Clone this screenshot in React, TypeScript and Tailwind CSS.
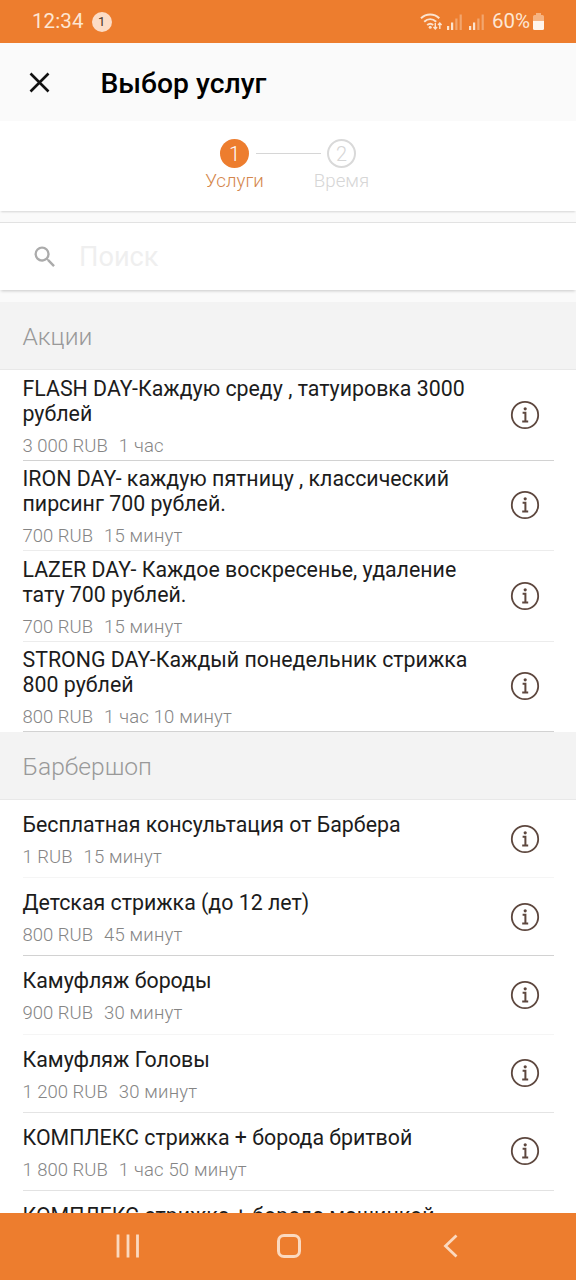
import React from "react";

type Service = {
  title: string;
  price: string;
  duration: string;
  line: string;
};

const promotions: Service[] = [
  {
    title: "FLASH DAY-Каждую среду , татуировка 3000 рублей",
    price: "3 000 RUB",
    duration: "1 час",
    line: "border-[#d2d2d2]",
  },
  {
    title: "IRON DAY- каждую пятницу , классический пирсинг 700 рублей.",
    price: "700 RUB",
    duration: "15 минут",
    line: "border-[#ececec]",
  },
  {
    title: "LAZER DAY- Каждое воскресенье, удаление тату 700 рублей.",
    price: "700 RUB",
    duration: "15 минут",
    line: "border-[#ececec]",
  },
  {
    title: "STRONG DAY-Каждый понедельник стрижка 800 рублей",
    price: "800 RUB",
    duration: "1 час 10 минут",
    line: "border-[#d2d2d2]",
  },
];

const barbershop: Service[] = [
  {
    title: "Бесплатная консультация от Барбера",
    price: "1 RUB",
    duration: "15 минут",
    line: "border-[#f5f5f5]",
  },
  {
    title: "Детская стрижка (до 12 лет)",
    price: "800 RUB",
    duration: "45 минут",
    line: "border-[#d2d2d2]",
  },
  {
    title: "Камуфляж бороды",
    price: "900 RUB",
    duration: "30 минут",
    line: "border-[#f5f5f5]",
  },
  {
    title: "Камуфляж Головы",
    price: "1 200 RUB",
    duration: "30 минут",
    line: "border-[#e4e4e4]",
  },
  {
    title: "КОМПЛЕКС стрижка + борода бритвой",
    price: "1 800 RUB",
    duration: "1 час 50 минут",
    line: "border-[#e2e2e2]",
  },
  {
    title: "КОМПЛЕКС стрижка + борода машинкой",
    price: "1 500 RUB",
    duration: "1 час 30 минут",
    line: "border-[#e2e2e2]",
  },
];

function InfoIcon() {
  return (
    <svg width="30" height="30" viewBox="0 0 30 30" fill="none" stroke="#5d473e">
      <circle cx="15" cy="15" r="13.2" strokeWidth="1.8" />
      <circle cx="15.2" cy="8.8" r="1.6" fill="#5d473e" stroke="none" />
      <path d="M12.6 12.8h2.8v8.6M12.2 21.6h6" strokeWidth="2" />
    </svg>
  );
}

function SignalIcon() {
  return (
    <svg width="16" height="17" viewBox="0 0 16 17" fill="#fbe3cf">
      <rect x="0" y="12" width="2.2" height="4" />
      <rect x="4" y="8.5" width="2.2" height="7.5" />
      <rect x="8.3" y="4.5" width="2.2" height="11.5" opacity="0.4" />
      <rect x="12.6" y="0.5" width="2.2" height="15.5" opacity="0.4" />
    </svg>
  );
}

function StatusBar() {
  return (
    <div className="flex h-[43px] shrink-0 items-center bg-[#ed7d2e] pl-8 pr-[31px] text-[#fde6d3]">
      <span className="text-[20.5px] tracking-[0.1px]">12:34</span>
      <span className="ml-2 flex size-5 items-center justify-center rounded-full bg-[#fcdcc6] text-[13px] text-[#4a3428]">
        1
      </span>
      <div className="ml-auto flex items-center">
        <svg width="23" height="18" viewBox="0 0 23 18" fill="none" stroke="#fbe3cf">
          <path d="M1 5.2C6.3.2 14 .2 19.3 5.2" strokeWidth="2" />
          <path d="M4.2 8.8c3.6-3.3 8.4-3.3 12 0" strokeWidth="2" />
          <path d="M7.2 12c1.9-1.6 4.1-1.6 6 0" strokeWidth="2" />
          <circle cx="10.2" cy="14.3" r="1.5" fill="#fbe3cf" stroke="none" />
          <path d="M15.3 10v5.8M13.5 14l1.8 1.9 1.8-1.9M19.8 16v-5.8M18 12l1.8-1.9 1.8 1.9" strokeWidth="1.4" />
        </svg>
        <div className="ml-1 flex items-center gap-1.5 pt-0.5">
          <SignalIcon />
          <SignalIcon />
        </div>
        <span className="ml-[7px] text-[20.5px]">60%</span>
        <svg className="ml-[3px] mr-px" width="11" height="17" viewBox="0 0 11 17">
          <path d="M3 0h5v2h1.5A1.5 1.5 0 0 1 11 3.5V8H0V3.5A1.5 1.5 0 0 1 1.5 2H3z" fill="#f6b482" />
          <path d="M0 8h11v7.5a1.5 1.5 0 0 1-1.5 1.5h-8A1.5 1.5 0 0 1 0 15.5z" fill="#fff5ec" />
        </svg>
      </div>
    </div>
  );
}

function Stepper() {
  return (
    <div className="relative z-10 flex h-[90px] shrink-0 justify-center bg-white pt-[18px] shadow-[0_2px_2px_-1px_rgba(0,0,0,0.15)]">
      <div className="flex w-[60px] flex-col items-center text-[#d4864c]">
        <span className="flex size-[29px] items-center justify-center rounded-full bg-[#ed7d2e] pt-px text-[20px] font-light text-white">
          1
        </span>
        <span className="mt-[3px] text-[18.7px] leading-5 font-light">Услуги</span>
      </div>
      <div className="-mx-[9px] mt-3.5 h-px w-[65px] bg-[#d6d6d6]" />
      <div className="flex w-[60px] flex-col items-center text-[#d6d6d6]">
        <span className="flex size-[29px] items-center justify-center rounded-full border-2 border-[#d9d9d9] pt-px text-[20px] font-light">
          2
        </span>
        <span className="mt-[3px] text-[18.7px] leading-5 font-light">Время</span>
      </div>
    </div>
  );
}

function SearchBar() {
  return (
    <div className="relative mt-[11px] mb-3 flex h-[68px] shrink-0 items-center border-t border-[#e2e2e2] bg-white pl-[31px] shadow-[0_2px_3px_-1px_rgba(0,0,0,0.2)]">
      <svg width="28" height="28" viewBox="0 0 24 24" fill="#ababab">
        <path d="M15.5 14h-.79l-.28-.27A6.47 6.47 0 0 0 16 9.5 6.5 6.5 0 1 0 9.5 16c1.61 0 3.09-.59 4.23-1.57l.27.28v.79l5 4.99L20.49 19l-4.99-5zm-6 0C7.01 14 5 11.99 5 9.5S7.01 5 9.5 5 14 7.01 14 9.5 11.99 14 9.5 14z" />
      </svg>
      <span className="ml-5 pt-0.5 text-[27.2px] text-[#efefef]">Поиск</span>
    </div>
  );
}

function SectionHeader({ title }: { title: string }) {
  return (
    <h2 className="flex h-[68px] shrink-0 items-center border-b border-[#e8e8e8] bg-[#f3f3f3] pt-[3px] pl-[22.5px] text-[24.6px] font-light text-[#999]">
      {title}
    </h2>
  );
}

function ServiceRow({ item, tall }: { item: Service; tall?: boolean }) {
  return (
    <div
      className={`ml-[22.5px] mr-[22px] flex shrink-0 items-center justify-between border-b pr-3.5 ${
        tall ? "h-[90.5px]" : "h-[78.2px]"
      } ${item.line}`}
    >
      <div className="w-[456px] pt-[3px]">
        <div className="text-[21.35px] leading-[25px] text-[#1c1c1c]">{item.title}</div>
        <div className="mt-[9px] flex gap-[11px] text-[18.5px] leading-[22px] font-light text-[#858585]">
          <span>{item.price}</span>
          <span className="tracking-[0.17px]">{item.duration}</span>
        </div>
      </div>
      <InfoIcon />
    </div>
  );
}

export default function App() {
  return (
    <div className="flex h-[1280px] w-[576px] flex-col overflow-hidden bg-[#fafafa] font-['Roboto',sans-serif]">
      <StatusBar />
      <header className="flex h-[78px] shrink-0 items-center bg-[#fafafa] pl-[29px]">
        <svg width="21" height="21" viewBox="0 0 21 21" stroke="#111" strokeWidth="2.6">
          <path d="M1.5 1.5l18 18M19.5 1.5l-18 18" />
        </svg>
        <h1 className="ml-[50.5px] pt-1 text-[28.3px] font-medium text-black">Выбор услуг</h1>
      </header>
      <Stepper />
      <SearchBar />
      <main className="flex min-h-0 flex-1 flex-col overflow-hidden bg-white">
        <SectionHeader title="Акции" />
        {promotions.map((item) => (
          <ServiceRow key={item.title} item={item} tall />
        ))}
        <SectionHeader title="Барбершоп" />
        {barbershop.map((item) => (
          <ServiceRow key={item.title} item={item} />
        ))}
      </main>
      <nav className="flex h-[67px] shrink-0 items-center bg-[#ed7d2e] pb-0.5 pl-[116px]">
        <svg width="24" height="24" viewBox="0 0 24 24" stroke="#fbd9bf" strokeWidth="2.8">
          <path d="M2 0.5v23M12 0.5v23M21.5 0.5v23" />
        </svg>
        <span className="ml-[137px] size-6 rounded-[7px] border-[3px] border-[#fbd9bf]" />
        <svg className="ml-[142px]" width="15" height="24" viewBox="0 0 15 24" fill="none" stroke="#fbd9bf" strokeWidth="2.8">
          <path d="M13.5 1.5L2.5 12l11 10.5" />
        </svg>
      </nav>
    </div>
  );
}
